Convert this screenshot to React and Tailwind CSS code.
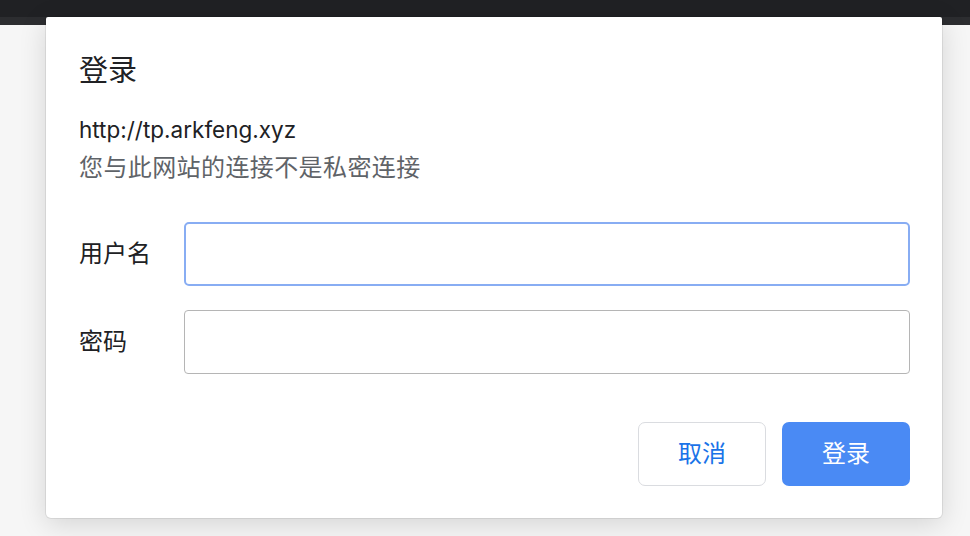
import { useState } from 'react';

const font = "font-['Inter','Noto_Sans_CJK_SC',sans-serif]";

export default function App() {
  const [user, setUser] = useState('');
  const [pass, setPass] = useState('');

  return (
    <div className={`relative w-full h-[536px] overflow-hidden bg-[#f6f6f6] ${font}`}>
      <div className="h-[17px] bg-[#202124]" />
      <div className="h-[8px] bg-[#2c2d30]" />

      <div className="absolute left-[46px] top-[17px] w-[896px] h-[501px] bg-white rounded-t-[2px] rounded-b-[5px] shadow-[0_0_0_1px_rgba(0,0,0,0.07),0_6px_28px_rgba(0,0,0,0.14)] pl-[33px] pr-[32px] pt-[36px] pb-[32px] flex flex-col">
        <h1 className="text-[29px] leading-[36px] text-[#202124] font-normal">登录</h1>
        <p className="mt-[22px] text-[22.5px] leading-[38px] text-[#202124]">http://tp.arkfeng.xyz</p>
        <p className="text-[24px] leading-[38px] tracking-[0.4px] text-[#5f6368]">您与此网站的连接不是私密连接</p>

        <div className="mt-[35px] flex flex-col gap-[24px]">
          <div className="flex items-center">
            <label className="w-[105px] shrink-0 text-[24px] text-[#202124]">用户名</label>
            <input
              value={user}
              onChange={e => setUser(e.target.value)}
              className="flex-1 min-w-0 h-[64px] rounded-[5px] border-2 border-[#88adf3] px-3 text-[21px] outline-none"
            />
          </div>
          <div className="flex items-center">
            <label className="w-[105px] shrink-0 text-[24px] text-[#202124]">密码</label>
            <input
              type="password"
              value={pass}
              onChange={e => setPass(e.target.value)}
              className="flex-1 min-w-0 h-[64px] rounded-[4px] border border-[#b5b5b5] px-3 text-[21px] outline-none"
            />
          </div>
        </div>

        <div className="mt-auto flex justify-end gap-[16px]">
          <button className="w-[128px] h-[64px] rounded-[7px] border border-[#dadce0] bg-white text-[24px] text-[#1a73e8]">取消</button>
          <button className="w-[128px] h-[64px] rounded-[7px] bg-[#4a8af4] text-[24px] text-white">登录</button>
        </div>
      </div>
    </div>
  );
}
